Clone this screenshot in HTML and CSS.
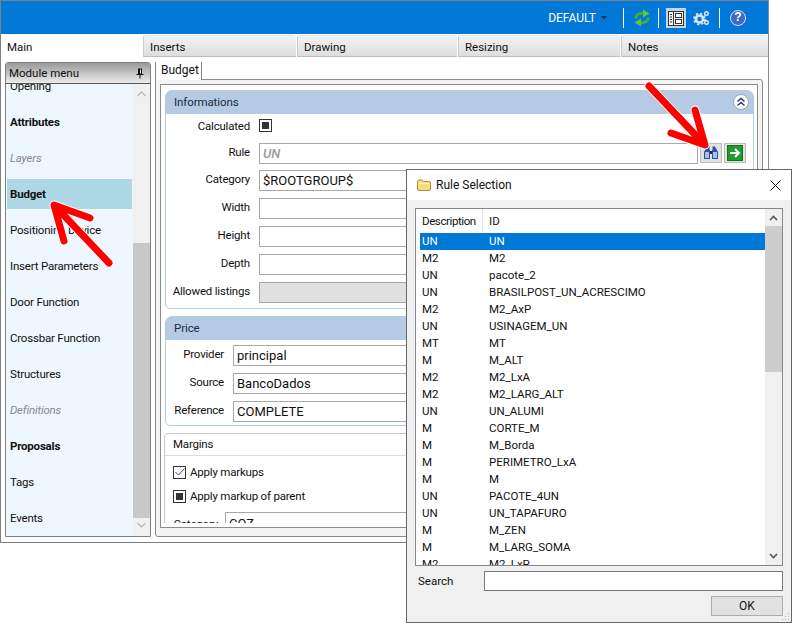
FILE: index.html
```html
<!doctype html>
<html>
<head>
    <meta charset="utf-8"/>
    <title>Module menu</title>
    <link rel="stylesheet" href="styles.css">
</head>
<body>

<div class="window">
    <div class="topbar">
        <span class="profile">DEFAULT</span><i class="caret"></i>
        <i class="sep sep-a"></i>
        <svg class="ico-refresh" width="18" height="18" viewBox="0 0 18 18">
            <path d="M2.500 9.500C3 5.500 7 3.500 11 4.500" fill="none" stroke="#3fb02f" stroke-width="2.800"/>
            <path d="M10 .5L16.500 4.500L10 8.500Z" fill="#5cc63e"/>
            <path d="M15.500 8.500C15 12.500 11 14.500 7 13.500" fill="none" stroke="#3fb02f" stroke-width="2.800"/>
            <path d="M8 9.500L1.500 13.500L8 17.500Z" fill="#5cc63e"/>
        </svg>
        <i class="sep sep-b"></i>
        <span class="ico-active">
            <svg width="18" height="18" viewBox="0 0 18 18">
                <rect x="1.500" y="2.500" width="15" height="14" fill="#f4f4f4" stroke="#333"/>
                <path d="M6.500 2.500V16.500M3 5.500H5M3 8H5M3 10.500H5M3 13H5" stroke="#333" fill="none"/>
                <rect x="8.500" y="4.500" width="6" height="4" fill="#fff" stroke="#333"/>
                <rect x="8.500" y="10.500" width="6" height="4" fill="#fff" stroke="#333"/>
            </svg>
        </span>
        <svg class="ico-gears" width="17" height="18" viewBox="0 0 17 18">
            <circle cx="6.500" cy="10" r="3.500" fill="none" stroke="#dbe6f2" stroke-width="2.600"/>
            <circle cx="6.500" cy="10" r="5.500" fill="none" stroke="#dbe6f2" stroke-width="1.800" stroke-dasharray="2.300 2"/>
            <circle cx="13.500" cy="4.500" r="1.800" fill="none" stroke="#dbe6f2" stroke-width="1.400"/>
            <circle cx="13.500" cy="13.500" r="1.800" fill="none" stroke="#dbe6f2" stroke-width="1.400"/>
        </svg>
        <i class="sep sep-c"></i>
        <span class="ico-help">?</span>
    </div>

    <div class="tabs">
        <div class="tab tab-on">Main</div>
        <div class="tab w-inserts">Inserts</div>
        <div class="tab w-drawing">Drawing</div>
        <div class="tab w-resizing">Resizing</div>
        <div class="tab tab-last">Notes</div>
    </div>

    <div class="main">
        <div class="menu">
            <div class="menu-head">
                <span>Module menu</span>
                <svg width="8" height="11" viewBox="0 0 8 11"><path d="M2 0.500H6V6H7.500V7H4.500V10.500H3.500V7H.5V6H2Z" fill="#111"/><rect x="4" y="1.500" width="1" height="4" fill="#ddd"/></svg>
            </div>
            <div class="menu-body">
                <div class="menu-list">
                    <div class="menu-item">Opening</div>
                    <div class="menu-item bold">Attributes</div>
                    <div class="menu-item off">Layers</div>
                    <div class="menu-item bold sel">Budget</div>
                    <div class="menu-item">Positioning Device</div>
                    <div class="menu-item">Insert Parameters</div>
                    <div class="menu-item">Door Function</div>
                    <div class="menu-item">Crossbar Function</div>
                    <div class="menu-item">Structures</div>
                    <div class="menu-item off">Definitions</div>
                    <div class="menu-item bold">Proposals</div>
                    <div class="menu-item">Tags</div>
                    <div class="menu-item">Events</div>
                </div>
                <div class="menu-scroll">
                    <svg class="arr" width="17" height="20" viewBox="0 0 17 20"><path d="M4.500 12L8.500 8L12.500 12" fill="none" stroke="#bbb" stroke-width="1.300"/></svg>
                    <div class="menu-gap"></div>
                    <div class="menu-thumb"></div>
                    <svg class="arr" width="17" height="18" viewBox="0 0 17 18"><path d="M4.500 5L8.500 9L12.500 5" fill="none" stroke="#bbb" stroke-width="1.300"/></svg>
                </div>
            </div>
        </div>

        <div class="content">
            <div class="page-tab">Budget</div>
            <div class="page">
                <div class="frame">
                    <div class="frame-in">
                        <div class="group">
                            <div class="group-head">
                                <span>Informations</span>
                                <span class="collapse">
                                    <svg width="10" height="10" viewBox="0 0 10 10"><path d="M1.500 4.500L5 1.500L8.500 4.500M1.500 8.500L5 5.500L8.500 8.500" fill="none" stroke="#1f3a78" stroke-width="1.400"/></svg>
                                </span>
                            </div>
                            <div class="group-body">
                                <div class="row row-calc"><label>Calculated</label><i class="check"></i></div>
                                <div class="row row-rule">
                                    <label>Rule</label>
                                    <div class="field ghost">UN</div>
                                    <span class="btn-square">
                                        <svg width="16" height="14" viewBox="0 0 16 14"><path d="M4 .5H6.500V4H7V13H1V6Z" fill="#2f4f9f"/><path d="M12 .5H9.500V4H9V13H15V6Z" fill="#2f4f9f"/><rect x="2" y="6" width="4" height="6" fill="#a9c1ea"/><rect x="10" y="6" width="4" height="6" fill="#a9c1ea"/><rect x="7" y="5" width="2" height="3" fill="#1d2f66"/></svg>
                                    </span>
                                    <span class="btn-square">
                                        <svg width="16" height="16" viewBox="0 0 16 16"><rect x=".5" y=".5" width="15" height="15" fill="#1e9a2e" stroke="#14741f"/><path d="M3 8H11M8 4L12 8L8 12" fill="none" stroke="#fff" stroke-width="2"/></svg>
                                    </span>
                                </div>
                                <div class="row"><label>Category</label><div class="field">$ROOTGROUP$</div></div>
                                <div class="row"><label>Width</label><div class="field"></div></div>
                                <div class="row"><label>Height</label><div class="field"></div></div>
                                <div class="row"><label>Depth</label><div class="field"></div></div>
                                <div class="row"><label>Allowed listings</label><div class="field field-off"></div></div>
                            </div>
                        </div>

                        <div class="group group-price">
                            <div class="group-head"><span>Price</span></div>
                            <div class="group-body">
                                <div class="row"><label>Provider</label><div class="field">principal</div></div>
                                <div class="row"><label>Source</label><div class="field">BancoDados</div></div>
                                <div class="row"><label>Reference</label><div class="field">COMPLETE</div></div>
                            </div>
                        </div>

                        <div class="margins">
                            <div class="margins-head">Margins</div>
                            <div class="check-row">
                                <i class="check check-tick">
                                    <svg width="10" height="10" viewBox="0 0 10 10"><path d="M.5 5L3.500 8L9.500 1.500" fill="none" stroke="#444" stroke-width="1"/></svg>
                                </i>
                                <span>Apply markups</span>
                            </div>
                            <div class="check-row"><i class="check"></i><span>Apply markup of parent</span></div>
                            <div class="row row-cat"><label>Category</label><div class="field">COZ</div></div>
                        </div>
                    </div>
                </div>
            </div>
        </div>
    </div>
</div>

<div class="dialog">
    <div class="dialog-title">
        <svg width="14" height="12" viewBox="0 0 14 12"><path d="M.5 2.500Q.5 1 2 1H5L6.500 2.500H12Q13.500 2.500 13.500 4V10Q13.500 11.500 12 11.500H2Q.5 11.500 .5 10Z" fill="#f7dc7c" stroke="#b08d2e"/><path d="M1.500 4.500H12.500" stroke="#fff3bd"/></svg>
        <span>Rule Selection</span>
        <svg class="dialog-x" width="11" height="11" viewBox="0 0 11 11"><path d="M.5 .5L10.500 10.500M10.500 .5L.5 10.500" stroke="#111" stroke-width="1"/></svg>
    </div>
    <div class="dialog-body">
        <div class="listbox">
            <div class="list-main">
                <div class="list-head"><span class="col-a">Description</span><span>ID</span></div>
                <div class="list-row list-on"><span class="col-a">UN</span><span>UN</span></div>
                <div class="list-row"><span class="col-a">M2</span><span>M2</span></div>
                <div class="list-row"><span class="col-a">UN</span><span>pacote_2</span></div>
                <div class="list-row"><span class="col-a">UN</span><span>BRASILPOST_UN_ACRESCIMO</span></div>
                <div class="list-row"><span class="col-a">M2</span><span>M2_AxP</span></div>
                <div class="list-row"><span class="col-a">UN</span><span>USINAGEM_UN</span></div>
                <div class="list-row"><span class="col-a">MT</span><span>MT</span></div>
                <div class="list-row"><span class="col-a">M</span><span>M_ALT</span></div>
                <div class="list-row"><span class="col-a">M2</span><span>M2_LxA</span></div>
                <div class="list-row"><span class="col-a">M2</span><span>M2_LARG_ALT</span></div>
                <div class="list-row"><span class="col-a">UN</span><span>UN_ALUMI</span></div>
                <div class="list-row"><span class="col-a">M</span><span>CORTE_M</span></div>
                <div class="list-row"><span class="col-a">M</span><span>M_Borda</span></div>
                <div class="list-row"><span class="col-a">M</span><span>PERIMETRO_LxA</span></div>
                <div class="list-row"><span class="col-a">M</span><span>M</span></div>
                <div class="list-row"><span class="col-a">UN</span><span>PACOTE_4UN</span></div>
                <div class="list-row"><span class="col-a">UN</span><span>UN_TAPAFURO</span></div>
                <div class="list-row"><span class="col-a">M</span><span>M_ZEN</span></div>
                <div class="list-row"><span class="col-a">M</span><span>M_LARG_SOMA</span></div>
                <div class="list-row"><span class="col-a">M2</span><span>M2_LxP</span></div>
            </div>
            <div class="list-scroll">
                <svg width="17" height="17" viewBox="0 0 17 17"><path d="M5 11L8.500 7.500L12 11" fill="none" stroke="#555" stroke-width="1.600"/></svg>
                <div class="list-thumb"></div>
                <svg class="list-down" width="17" height="17" viewBox="0 0 17 17"><path d="M5 6L8.500 9.500L12 6" fill="none" stroke="#555" stroke-width="1.600"/></svg>
            </div>
        </div>
        <div class="search"><label>Search</label><div class="search-box"></div></div>
        <div class="dialog-foot"><div class="ok">OK</div></div>
        <svg class="grip" width="9" height="9" viewBox="0 0 9 9"><path d="M7 1h1v1H7zM4 4h1v1H4zM7 4h1v1H7zM1 7h1v1H1zM4 7h1v1H4zM7 7h1v1H7z" fill="#aaa"/></svg>
    </div>
</div>

<!-- arrows drawn on top of the screenshot -->
<svg class="arrows" width="802" height="630" viewBox="0 0 802 630">
    <g class="arrow-halo">
        <path d="M649 86L703 143M695 110L705 145L671 133"/>
        <path d="M109 263L56 207M90 218L54 205L64 241"/>
    </g>
    <g class="arrow-ink">
        <path d="M649 86L703 143M695 110L705 145L671 133"/>
        <path d="M109 263L56 207M90 218L54 205L64 241"/>
    </g>
</svg>

</body>
</html>
```

FILE: styles.css
```css
*{margin:0;padding:0;box-sizing:border-box}
body{font:11.5px Roboto,"Liberation Sans",sans-serif;color:#111;background:#fff;width:802px;height:630px;overflow:hidden;position:relative}
i{display:block;font-style:normal}

.window{width:769px;height:543px;border:1px solid #7f7f7f;border-right-color:#8c8c8c;display:flex;flex-direction:column;background:#fff}

.topbar{height:33px;background:#0078d7;display:flex;align-items:center;color:#fff;padding-right:22px;flex:none}
.profile{margin-left:auto;font-size:12px}
.caret{border:3px solid transparent;border-top:3px solid #14233a;margin:3px 0 0 5px}
.sep{width:1px;height:20px;background:#fff}
.sep-a{margin-left:16px}
.ico-refresh{margin-left:9px}
.sep-b{margin-left:7px}
.ico-active{width:20px;height:20px;background:#c3d5e8;display:flex;align-items:center;justify-content:center;margin-left:7px}
.ico-gears{margin-left:7px}
.sep-c{margin-left:9px}
.ico-help{width:16px;height:16px;border-radius:50%;background:#3f66c9;border:1.500px solid #dce6f5;color:#fff;font:bold 12px/13px "Liberation Sans",sans-serif;text-align:center;margin-left:10px}

.tabs{height:22px;margin-top:1px;display:flex;flex:none}
.tab{padding:4px 0 0 6px;background:linear-gradient(#f3f3f3,#dedede);border-left:1px solid #c9c9c9;border-top:1px solid #e4e4e4;border-bottom:1px solid #bdbdbd;border-radius:3px 3px 0 0;margin-left:1px}
.tab-on{width:141px;margin-left:0;background:#fff;border:none;padding:5px 0 0 6px}
.w-inserts{width:153px}
.w-drawing{width:160px}
.w-resizing{width:162px}
.tab-last{flex:1}

.main{flex:1;display:flex;padding:5px 5px 5px 4px;gap:4px;min-height:0}

.menu{width:146px;border:1px solid #808080;border-radius:3px 3px 0 0;display:flex;flex-direction:column;overflow:hidden}
.menu-head{height:21px;background:linear-gradient(#999,#ececec);border-bottom:1px solid #555;display:flex;align-items:center;justify-content:space-between;padding:0 6px 0 3px;flex:none}
.menu-body{flex:1;display:flex;min-height:0}
.menu-list{width:127px;background:#eef6fe;overflow:hidden;padding-left:1px}
.menu-item{height:30px;line-height:30px;margin-bottom:6px;padding-left:3px;width:125px;letter-spacing:-.2px}
.menu-item:first-child{margin-top:-13px}
.bold{font-weight:bold}
.off{font-style:italic;color:#8a8a8a}
.sel{background:#aed8e6}
.menu-scroll{flex:1;background:#f0f0f0;display:flex;flex-direction:column}
.arr{flex:none}
.menu-gap{height:139px}
.menu-thumb{flex:1;background:#c8c8c8}

.content{flex:1;display:flex;flex-direction:column;min-width:0}
.page-tab{width:47px;height:18px;background:#fff;border-left:1px solid #808080;border-right:1px solid #808080;padding:1px 0 0 5px;margin-bottom:-1px;position:relative;z-index:1;flex:none;font-size:12px}
.page{flex:1;border:1px solid #8c8c8c;border-radius:0 3px 3px 3px;padding:4px 4px 8px;min-height:0;background:#f4f4f4}
.frame{height:100%;border:1px solid #8c8c8c;background:#fff;padding:5px 3px 4px 4px}
.frame-in{height:100%;margin-left:-1px;padding-left:1px;overflow:hidden}

.group{border:1px solid #b5cbe4;border-radius:8px 8px 5px 5px}
.group-head{height:24px;margin:-1px -1px 0;background:#b5cbe4;border-radius:8px 8px 0 0;display:flex;align-items:center;justify-content:space-between;padding:0 5px 0 9px;color:#1b2a3a;letter-spacing:-.1px}
.collapse{width:16px;height:16px;border-radius:50%;background:#fff;border:1px solid #98a5b5;display:flex;align-items:center;justify-content:center}
.group-body{padding:1px 7px 5px 0}
.row{display:flex;align-items:center;height:21px;margin-bottom:7px}
.row:last-child{margin-bottom:0}
.row label{width:84px;text-align:right;margin-right:9px;flex:none;padding-bottom:3px;white-space:nowrap;letter-spacing:-.2px}
.row-calc label{padding-bottom:0}
.row-rule{height:20px}
.field{flex:1;height:21px;border:1px solid #a8a8a8;background:#fff;padding-left:3px;line-height:19px;font-size:13px;white-space:nowrap}
.ghost{font-style:italic;font-weight:500;color:#9a9a9a}
.field-off{background:#e0e0e0}
.btn-square{width:22px;height:20px;border:1px solid #bdbdbd;background:#e2e2e2;display:flex;align-items:center;justify-content:center;flex:none;margin-left:2px}
.check{width:13px;height:13px;border:1px solid #333;background:#fff;display:flex;align-items:center;justify-content:center}
.check:after{content:"";width:7px;height:7px;background:#333}
.check-tick:after{display:none}

.group-price{margin-top:7px}
.group-price .group-body{padding:5px 7px 3px 0}
.group-price .row label{width:58px;margin-right:9px}

.margins{margin:7px 0 0 -1px;border:1px solid #c8c8c8;border-radius:4px;height:200px}
.margins-head{height:22px;line-height:21px;border-bottom:1px solid #dcdcdc;padding-left:8px;letter-spacing:-.2px}
.check-row{display:flex;align-items:center;gap:4px;height:24px;padding-left:8px;letter-spacing:-.2px}
.check-row:nth-child(2){margin-top:4px}
.margins .row-cat{margin-top:4px;padding-right:6px}
.margins .row-cat label{width:53px;margin-right:7px;padding:2px 0 0}
.row-cat .field{line-height:21px}

.dialog{position:absolute;left:406px;top:169px;width:386px;height:454px;border:1px solid #666;background:#fff;display:flex;flex-direction:column}
.dialog-title{height:30px;display:flex;align-items:center;padding:0 10px 0 10px;gap:5px;flex:none;font-size:12px}
.dialog-title span{flex:1}
.dialog-body{flex:1;background:#f0f0f0;position:relative;padding:8px 8px 0;display:flex;flex-direction:column}
.listbox{height:358px;border:1px solid #828790;background:#fff;display:flex;overflow:hidden;flex:none}
.list-main{flex:1;padding-left:4px;min-width:0}
.list-head{height:24px;display:flex;align-items:center;margin-left:-4px;padding-left:2px}
.list-head .col-a{width:65px;padding-left:4px;border-right:1px solid #e5e5e5;height:24px;line-height:24px;margin-right:6px;letter-spacing:-.4px}
.list-row{height:17px;line-height:17px;display:flex}
.col-a{width:69px;padding-left:2px;flex:none}
.list-on{background:#0078d7;color:#fff}
.list-scroll{width:17px;background:#f0f0f0;display:flex;flex-direction:column;flex:none}
.list-thumb{height:146px;background:#cdcdcd}
.list-down{margin-top:auto}
.search{display:flex;align-items:center;margin-top:5px;height:20px;flex:none}
.search label{width:69px;padding-left:3px}
.search-box{flex:1;height:20px;border:1px solid #7a7a7a;background:#fff}
.dialog-foot{display:flex;justify-content:flex-end;margin-top:5px}
.ok{width:72px;height:20px;border:1px solid #adadad;background:#e1e1e1;text-align:center;line-height:18px;font-size:12px}
.grip{position:absolute;right:1px;bottom:1px}

.arrows{position:absolute;left:0;top:0;pointer-events:none}
.arrows path{fill:none;stroke-linecap:round;stroke-linejoin:round}
.arrow-halo path{stroke:#fff;stroke-width:9}
.arrow-ink path{stroke:#f00;stroke-width:7}
```
